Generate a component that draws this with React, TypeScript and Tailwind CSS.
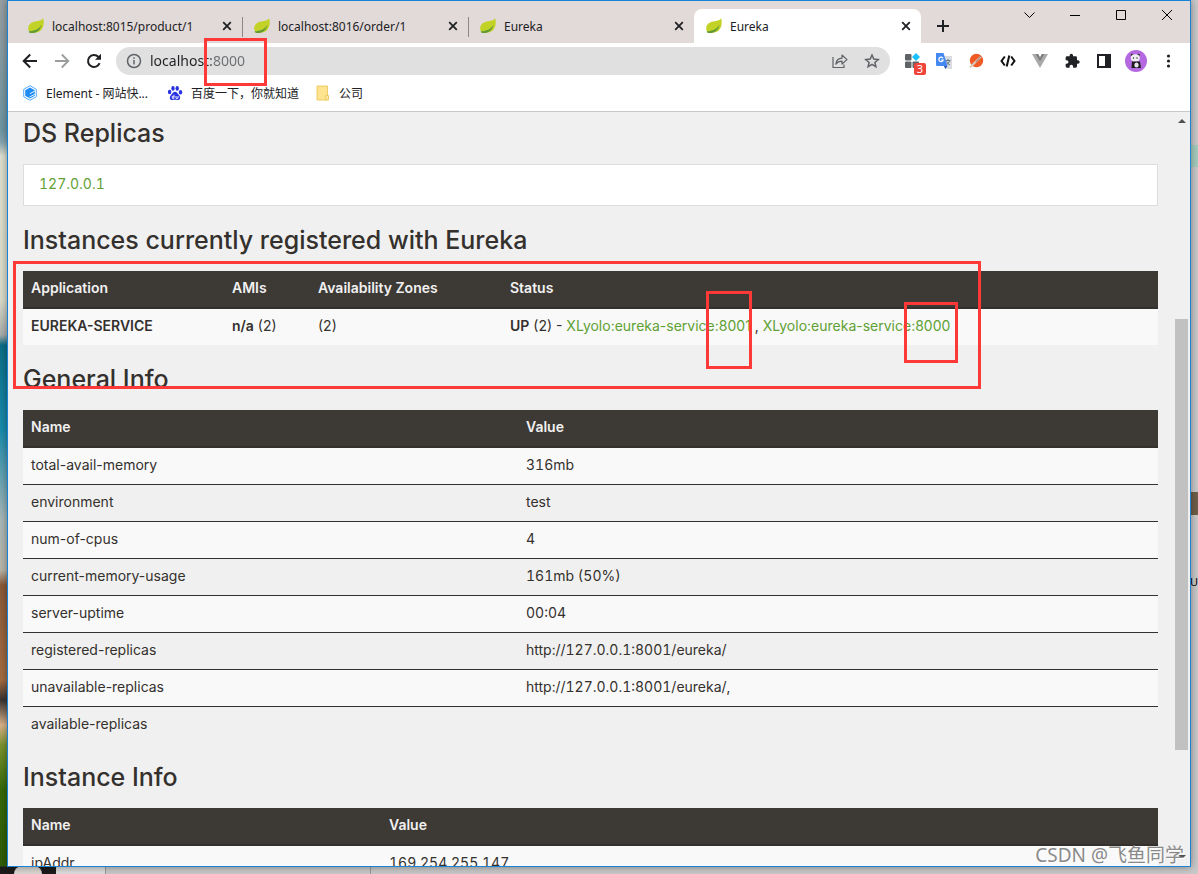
import type { ReactNode } from "react";
import { clsx } from "clsx";

const tabs = [
  { title: "localhost:8015/product/1", active: false, separator: true },
  { title: "localhost:8016/order/1", active: false, separator: true },
  { title: "Eureka", active: false, separator: false },
  { title: "Eureka", active: true, separator: false },
];

const generalInfo = [
  ["total-avail-memory", "316mb"],
  ["environment", "test"],
  ["num-of-cpus", "4"],
  ["current-memory-usage", "161mb (50%)"],
  ["server-uptime", "00:04"],
  ["registered-replicas", "http://127.0.0.1:8001/eureka/"],
  ["unavailable-replicas", "http://127.0.0.1:8001/eureka/,"],
  ["available-replicas", ""],
];

const instanceInfo = [["ipAddr", "169.254.255.147"]];

/* Icons */

const LeafIcon = () => (
  <svg viewBox="0 0 16 16" className="size-4 shrink-0">
    <path d="M15.200.3C14.300 2 12 2.700 8.500 3.300 4 4 .5 6 .2 9.800c-.1 1.500.3 3 1.100 3.900 4 1.500 9 1.400 11.900-1.700C16 9 16.200 4.300 15.200.3z" fill="#c3d226" />
    <path d="M.8 13.300c5.500-.3 10.200-2 12.600-6.600-.5 5-5 8.800-11 8.300-.9-.1-1.600-.8-1.600-1.700z" fill="#5f9a35" />
  </svg>
);

const CloseIcon = () => (
  <svg viewBox="0 0 16 16" className="size-4" stroke="#202124" strokeWidth="1.800">
    <path d="M4.200 4.200l7.600 7.600M11.800 4.200l-7.600 7.600" />
  </svg>
);

const BackIcon = () => (
  <svg viewBox="0 0 16 16" className="size-4" fill="none" stroke="#202124" strokeWidth="2">
    <path d="M15 8H2.500M8.200 1.500L1.700 8l6.500 6.500" />
  </svg>
);

const ForwardIcon = () => (
  <svg viewBox="0 0 16 16" className="size-4" fill="none" stroke="#9b9c9d" strokeWidth="1.800">
    <path d="M1 8h12.500M7.800 1.500L14.300 8l-6.500 6.500" />
  </svg>
);

const ReloadIcon = () => (
  <svg viewBox="0 0 16 16" className="size-4" fill="none" stroke="#202124" strokeWidth="2">
    <path d="M13.600 10.200A6 6 0 1 1 12.300 3.800L14 5.500" />
    <path d="M15 .8v6H9z" fill="#202124" stroke="none" />
  </svg>
);

const InfoIcon = () => (
  <svg viewBox="0 0 16 16" className="size-4 shrink-0" fill="none" stroke="#5f6368" strokeWidth="1.500">
    <circle cx="8" cy="8" r="6.500" />
    <path d="M8 7v4.500M8 4.200v1.600" />
  </svg>
);

const ShareIcon = () => (
  <svg viewBox="0 0 16 16" className="size-4" fill="none" stroke="#5f6368" strokeWidth="1.200">
    <path d="M1 4v10.500h11V11.500" />
    <path d="M3.800 11.200C4.200 7.500 6.500 5.300 10 5.200V2l5 4.600-5 4.400V8.200c-2.800 0-4.700.9-6.200 3z" strokeLinejoin="round" />
  </svg>
);

const StarIcon = () => (
  <svg viewBox="0 0 16 16" className="size-4" fill="none" stroke="#5f6368" strokeWidth="1.500">
    <path d="M8 2l1.800 4.100 4.400.4-3.300 2.900 1 4.300L8 11.400l-3.900 2.300 1-4.300L1.800 6.500l4.400-.4z" />
  </svg>
);

const BlocksIcon = () => (
  <svg viewBox="0 0 16 16" className="size-4">
    <rect x="1" y="1" width="6.500" height="6.500" rx="1" fill="#5f6368" />
    <rect x="1" y="8.500" width="6.500" height="6.500" rx="1" fill="#5f6368" />
    <rect x="8.500" y="8.500" width="6.500" height="6.500" rx="1" fill="#5f6368" />
    <path d="M12 0l4 4-4 4-4-4z" fill="#19c0fb" />
  </svg>
);

const TranslateIcon = () => (
  <svg viewBox="0 0 16 16" className="size-4">
    <path d="M6 3h10v13H9z" fill="#dadce0" />
    <path d="M9.500 7.500h5M12 6v1.500M13.700 7.500c-.5 2-2 3.500-3.700 4.300M10.500 8.500c.8 1.500 2 2.800 3.500 3.500" stroke="#607988" fill="none" />
    <path d="M0 0h7.500l4 13H1.200A1.200 1.200 0 0 1 0 11.800z" fill="#4688f1" />
    <path d="M8 13h3.500L9.200 16z" fill="#2456b0" />
    <path d="M7 5.200A2.200 2.200 0 1 0 7.200 7H5.200" stroke="#fff" fill="none" strokeWidth="1.200" />
  </svg>
);

const PostmanIcon = () => (
  <svg viewBox="0 0 16 16" className="size-4">
    <circle cx="8.500" cy="7.500" r="6.700" fill="#f15a24" />
    <path d="M13 3.500L6 10.500M6.500 10L2 14.500" stroke="#d8c9bd" strokeWidth="2" />
    <path d="M13 3l-5 6" stroke="#8d6a58" strokeWidth=".8" />
  </svg>
);

const CodeIcon = () => (
  <svg viewBox="0 0 16 16" className="size-4" fill="none" stroke="#111" strokeWidth="2">
    <path d="M4.800 3.500L1.500 8l3.300 4.500M11.200 3.500L14.500 8l-3.300 4.500M9.300 2.500l-2.600 11" />
  </svg>
);

const VueIcon = () => (
  <svg viewBox="0 0 16 16" className="size-4">
    <path d="M0 1h3.400L8 9l4.600-8H16L8 15z" fill="#a9a9a9" />
    <path d="M3.400 1h2.800L8 4.200 9.800 1h2.800L8 9z" fill="#7d7d7d" />
  </svg>
);

const PuzzleIcon = () => (
  <svg viewBox="0 0 24 24" className="size-4" fill="#202124">
    <path d="M21 11h-1.500V7a2 2 0 0 0-2-2h-4V3.500a2.500 2.500 0 0 0-5 0V5h-4a2 2 0 0 0-2 2v3.800H4a2.700 2.700 0 0 1 0 5.400H2.500V20a2 2 0 0 0 2 2h3.800v-1.500a2.700 2.700 0 0 1 5.400 0V22h3.800a2 2 0 0 0 2-2v-4H21a2.500 2.500 0 0 0 0-5z" />
  </svg>
);

const SidePanelIcon = () => (
  <svg viewBox="0 0 16 16" className="size-4">
    <path d="M1 1h14v14H1zM3 3v10h6V3z" fill="#202124" fillRule="evenodd" />
  </svg>
);

const AvatarIcon = () => (
  <svg viewBox="0 0 22 22" className="size-[22px]">
    <circle cx="11" cy="11" r="11" fill="#b469e0" />
    <circle cx="7" cy="5" r="1.300" fill="#333" />
    <circle cx="13.500" cy="5" r="1.300" fill="#333" />
    <ellipse cx="10.300" cy="8" rx="4.500" ry="3.700" fill="#f1eef3" />
    <circle cx="8.500" cy="8" r=".7" fill="#222" />
    <circle cx="12" cy="8" r=".7" fill="#222" />
    <path d="M7 11.500h8l1 6.500H6.500z" fill="#1c1c1f" />
    <ellipse cx="11.500" cy="15" rx="2.200" ry="2.500" fill="#e8e4ea" />
  </svg>
);

const MoreIcon = () => (
  <svg viewBox="0 0 16 16" className="size-4" fill="#202124">
    <circle cx="8.500" cy="3" r="1.600" />
    <circle cx="8.500" cy="8" r="1.600" />
    <circle cx="8.500" cy="13" r="1.600" />
  </svg>
);

const ElementIcon = () => (
  <svg viewBox="0 0 16 16" className="size-4 shrink-0">
    <path d="M8 .7l6.300 3.600v7.400L8 15.300l-6.300-3.600V4.300z" fill="#fff" stroke="#55a9ff" />
    <path d="M8 2.500l4.800 2.700v5.600L8 13.500l-4.800-2.700V5.200z" fill="#1f8cf7" />
    <path d="M12.800 6L8 8.700M12.800 9.300L7.500 12" stroke="#fff" strokeWidth=".9" />
  </svg>
);

const BaiduIcon = () => (
  <svg viewBox="0 0 16 16" className="size-4" fill="#2932e1">
    <ellipse cx="2.600" cy="7" rx="1.700" ry="2.200" />
    <ellipse cx="6" cy="3.400" rx="1.700" ry="2.300" />
    <ellipse cx="10.200" cy="3.400" rx="1.700" ry="2.300" />
    <ellipse cx="13.500" cy="7.300" rx="1.700" ry="2.200" />
    <path d="M8 6.800c1.700 0 2.500 1.700 3.700 2.900 2 1.900 2.200 5.300-1 5.300-1 0-1.700-.2-2.700-.2s-1.700.2-2.700.2c-3.200 0-3-3.400-1-5.300C5.500 8.500 6.300 6.800 8 6.800z" />
    <path d="M7 9.800v3.500H5.300v-2H7M9 11v2.300h2V11" fill="none" stroke="#fff" strokeWidth=".9" />
  </svg>
);

const FolderIcon = () => (
  <svg viewBox="0 0 16 16" className="size-4">
    <path d="M2 1h10.500v14H2z" fill="#ffe48f" stroke="#e8c04c" strokeWidth=".8" />
    <path d="M10.800 10.500h2.700V15h-2.700z" fill="#ffe9a8" stroke="#e8c04c" strokeWidth=".8" />
  </svg>
);

/* Browser chrome */

const WindowControls = () => (
  <div className="-mt-2 ml-auto flex self-start">
    {[
      { label: "Search tabs", d: "M3.500 5.500l5 5 5-5" },
      { label: "Minimize", d: "M3 8.500h10" },
      { label: "Maximize", d: "M3.500 3.500h9v9h-9z" },
      { label: "Close", d: "M3 3l10 10M13 3L3 13" },
    ].map((control) => (
      <button key={control.label} aria-label={control.label} className="flex h-7 w-[46px] items-center justify-center">
        <svg viewBox="0 0 16 16" className="size-4" fill="none" stroke="#000" strokeWidth="1">
          <path d={control.d} />
        </svg>
      </button>
    ))}
  </div>
);

const TabStrip = () => (
  <div className="flex bg-[#e2dad8] pt-2 pl-2">
    {tabs.map((tab, index) => (
      <div
        key={index}
        className={clsx(
          "relative flex h-[34px] shrink items-center pr-[7px] pl-3",
          tab.active ? "w-[227px] rounded-t-lg bg-white" : "w-[226px]"
        )}
      >
        <LeafIcon />
        <button className="ml-2 min-w-0 flex-1 truncate pt-0.5 text-left text-xs text-[#202124]">{tab.title}</button>
        <button aria-label="Close tab">
          <CloseIcon />
        </button>
        {tab.separator && <span className="absolute top-2 -right-px h-5 w-px bg-[#8c8786]" />}
      </div>
    ))}
    <button aria-label="New tab" className="ml-3.5 flex h-[34px] items-center">
      <svg viewBox="0 0 16 16" className="size-4" stroke="#202124" strokeWidth="2">
        <path d="M8 2v12M2 8h12" />
      </svg>
    </button>
    <WindowControls />
  </div>
);

const ToolbarButton = ({ label, children }: { label: string; children: ReactNode }) => (
  <button aria-label={label} className="relative flex h-7 w-8 shrink-0 items-center justify-center">
    {children}
  </button>
);

const Toolbar = () => (
  <div className="flex items-center px-1.5 py-1">
    <ToolbarButton label="Back"><BackIcon /></ToolbarButton>
    <ToolbarButton label="Forward"><ForwardIcon /></ToolbarButton>
    <ToolbarButton label="Reload"><ReloadIcon /></ToolbarButton>
    <div className="mx-1.5 flex h-7 min-w-0 flex-1 items-center rounded-full bg-[#e0e0e0] pr-0.5 pl-2.5">
      <InfoIcon />
      <input
        aria-label="Address"
        defaultValue="localhost:8000"
        className="ml-2 min-w-0 flex-1 bg-[linear-gradient(to_right,#202124_61px,#6b6f73_61px)] bg-clip-text text-sm text-transparent outline-none"
      />
      <ToolbarButton label="Share"><ShareIcon /></ToolbarButton>
      <ToolbarButton label="Bookmark"><StarIcon /></ToolbarButton>
    </div>
    <ToolbarButton label="Tab groups">
      <BlocksIcon />
      <span className="absolute right-0.5 bottom-0 size-3 rounded-xs bg-[#f0443a] text-center text-[11px] leading-3 text-white">3</span>
    </ToolbarButton>
    <ToolbarButton label="Translate"><TranslateIcon /></ToolbarButton>
    <ToolbarButton label="Postman"><PostmanIcon /></ToolbarButton>
    <ToolbarButton label="Code"><CodeIcon /></ToolbarButton>
    <ToolbarButton label="Vue"><VueIcon /></ToolbarButton>
    <ToolbarButton label="Extensions"><PuzzleIcon /></ToolbarButton>
    <ToolbarButton label="Side panel"><SidePanelIcon /></ToolbarButton>
    <ToolbarButton label="Profile"><AvatarIcon /></ToolbarButton>
    <ToolbarButton label="Menu"><MoreIcon /></ToolbarButton>
  </div>
);

const Bookmarks = () => (
  <nav className="mb-1 flex h-7 items-center gap-4 px-3.5 text-xs text-[#202124]">
    <a href="#" className="flex w-[129px] items-center gap-2 whitespace-nowrap">
      <ElementIcon />
      <span className="pt-0.5">Element - 网站快...</span>
    </a>
    <a href="#" className="flex items-center gap-2">
      <BaiduIcon />
      <span className="pt-0.5">百度一下，你就知道</span>
    </a>
    <a href="#" className="flex items-center gap-2">
      <FolderIcon />
      <span className="pt-0.5">公司</span>
    </a>
  </nav>
);

/* Eureka page */

const Heading = ({ children }: { children: ReactNode }) => (
  <h1 className="mt-[21px] mb-[18px] text-[25px] leading-[26px] font-medium">{children}</h1>
);

const HeadCell = ({ width, children }: { width?: string; children: ReactNode }) => (
  <th className={clsx("border-b-2 border-[#34302d] bg-[#3d3935] px-2 pt-[7px] pb-[9px] text-left font-semibold text-[#f1f1f1]", width)}>
    {children}
  </th>
);

const Cell = ({ className, children }: { className?: string; children: ReactNode }) => (
  <td className={clsx("px-2 pt-[7px] pb-[9px]", className)}>{children}</td>
);

const InfoTable = ({ nameWidth, rows }: { nameWidth: string; rows: string[][] }) => (
  <table className="w-full table-fixed border-separate border-spacing-0">
    <thead>
      <tr>
        <HeadCell width={nameWidth}>Name</HeadCell>
        <HeadCell>Value</HeadCell>
      </tr>
    </thead>
    <tbody>
      {rows.map(([name, value], index) => (
        <tr key={name} className="odd:bg-[#f9f9f9]">
          <Cell className={clsx(index > 0 && "border-t border-[#34302d]")}>{name}</Cell>
          <Cell className={clsx("tabular-nums", index > 0 && "border-t border-[#34302d]")}>{value}</Cell>
        </tr>
      ))}
    </tbody>
  </table>
);

const InstancesTable = () => (
  <table className="w-full table-fixed border-separate border-spacing-0">
    <thead>
      <tr>
        <HeadCell width="w-[201px]">Application</HeadCell>
        <HeadCell width="w-[86px]">AMIs</HeadCell>
        <HeadCell width="w-[192px]">Availability Zones</HeadCell>
        <HeadCell>Status</HeadCell>
      </tr>
    </thead>
    <tbody>
      <tr className="bg-[#f9f9f9]">
        <Cell className="font-semibold">EUREKA-SERVICE</Cell>
        <Cell><b className="font-semibold">n/a</b> (2)</Cell>
        <Cell>(2)</Cell>
        <Cell>
          <b className="font-semibold">UP</b> (2) -{" "}
          <a href="#" className="text-[#5fa134]">XLyolo:eureka-service:8001</a> ,{" "}
          <a href="#" className="text-[#5fa134]">XLyolo:eureka-service:8000</a>
        </Cell>
      </tr>
    </tbody>
  </table>
);

const EurekaPage = () => (
  <main className="min-w-0 flex-1 px-[15px] font-['Inter',sans-serif] text-sm leading-5 text-[#34302d]">
    <div className="-mt-[13px]">
      <Heading>DS Replicas</Heading>
    </div>
    <div className="border border-[#dddddd] bg-white px-[15px] pt-[9px] pb-[11px] tabular-nums">
      <a href="#" className="text-[#5fa134]">127.0.0.1</a>
    </div>
    <Heading>Instances currently registered with Eureka</Heading>
    <InstancesTable />
    <Heading>General Info</Heading>
    <InfoTable nameWidth="w-[495px]" rows={generalInfo} />
    <Heading>Instance Info</Heading>
    <InfoTable nameWidth="w-[358px]" rows={instanceInfo} />
  </main>
);

const Scrollbar = () => (
  <div className="flex w-[17px] flex-col items-center py-[7px]">
    <svg viewBox="0 0 8 4" className="h-1 w-2"><path d="M4 0l4 4H0z" fill="#505050" /></svg>
    <div className="grow-[196]" />
    <div className="w-[13px] grow-[431] bg-[#c1c1c1]" />
    <div className="grow-[105]" />
    <svg viewBox="0 0 8 4" className="h-1 w-2"><path d="M4 4l4-4H0z" fill="#505050" /></svg>
  </div>
);

/* Red frames drawn over the window */
const Marks = () => (
  <div className="pointer-events-none">
    <div className="absolute top-[38px] left-[204px] h-12 w-[63px] border-3 border-[#ff3838]" />
    <div className="absolute top-[261px] left-[13px] h-32 w-[968px] border-3 border-[#ff3838]" />
    <div className="absolute top-[291px] left-[706px] h-[78px] w-[46px] border-3 border-[#ff3838]" />
    <div className="absolute top-[302px] left-[904px] h-[61px] w-[54px] border-3 border-[#ff3838]" />
  </div>
);

export default function App() {
  return (
    <div className="relative flex h-screen flex-col overflow-hidden bg-[#c9c9c9] font-['Noto_Sans','Noto_Sans_CJK_SC',sans-serif]">
      {/* Desktop behind the window */}
      <div className="absolute inset-y-0 left-0 w-14 bg-[linear-gradient(to_bottom,#98a0a3_0px,#6f96a2_130px,#85a5b0_142px,#dfe0d0_156px,#dcdccc_300px,#a9adab_335px,#0b6e88_345px,#1a8cad_430px,#a9b8b8_520px,#b9b6aa_570px,#8a5a3a_585px,#a36c42_680px,#3a3434_700px,#dbb48c_725px,#7c9430_745px,#356a08_790px,#2e5c06_866px,#1b1b1b_867px)]" />
      <div className="absolute top-[145px] right-0 h-[22px] w-2 bg-[#a6cdbd]" />
      <div className="absolute top-[492px] right-0 h-[23px] w-2 bg-[#6f5f49]" />
      <span className="absolute top-[574px] right-0 text-[11px] leading-4 text-black">U</span>
      <div className="absolute bottom-0 left-[14px] h-2 w-7 rounded-t-full bg-[#d9d5d0]" />
      <div className="absolute bottom-0 left-14 h-2 w-[50px] border-r border-[#999] bg-[#dcdcdc]" />
      <div className="absolute bottom-0 left-[370px] h-2 w-px bg-[#999]" />

      <div className="relative mx-[7px] mb-[7px] flex min-h-0 flex-1 flex-col border border-[#1883d7] bg-white shadow-[0_0_8px_rgba(0,0,0,0.4)]">
        <TabStrip />
        <Toolbar />
        <Bookmarks />
        <div className="flex min-h-0 flex-1 overflow-hidden border-t border-[#c8c8c8] bg-[#f0f0f0]">
          <EurekaPage />
          <Scrollbar />
        </div>
      </div>

      <Marks />
      <span className="absolute right-[14px] bottom-[7px] text-[19px] leading-6 text-[#8a8a8a] [text-shadow:1px_1px_0_#fff]">CSDN @飞鱼同学</span>
    </div>
  );
}
